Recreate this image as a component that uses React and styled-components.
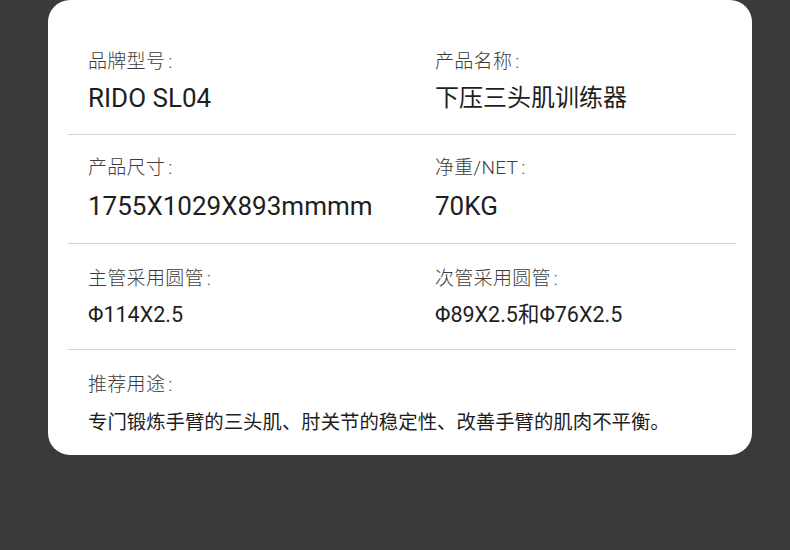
import styled, { createGlobalStyle } from 'styled-components';

const GlobalStyle = createGlobalStyle`
    html, body {
        margin: 0;
        padding: 0;
        background: #3a3a3a;
    }
    body {
        font-family: Roboto, 'Noto Sans CJK SC', sans-serif;
    }
`;

const specs = [
    {
        pad: '50px 0 21px',
        gap: '9px',
        cells: [
            { label: '品牌型号', value: 'RIDO SL04', size: 26 },
            { label: '产品名称', value: '下压三头肌训练器', size: 24 },
        ],
    },
    {
        pad: '21px 0 22px',
        gap: '11px',
        cells: [
            { label: '产品尺寸', value: '1755X1029X893mmmm', size: 26 },
            { label: '净重/NET', value: '70KG', size: 26 },
        ],
    },
    {
        pad: '23px 0 19px',
        gap: '9px',
        cells: [
            { label: '主管采用圆管', value: 'Φ114X2.5', size: 21.5 },
            { label: '次管采用圆管', value: 'Φ89X2.5和Φ76X2.5', size: 21.5 },
        ],
    },
];

function App() {
    return (
        <>
            <GlobalStyle />
            <Page>
                <Card>
                    {specs.map((row, i) => (
                        <Row key={i} $pad={row.pad}>
                            {row.cells.map((cell) => (
                                <Cell key={cell.label}>
                                    <Label>{cell.label}</Label>
                                    <Value $size={cell.size} $gap={row.gap}>
                                        {cell.value}
                                    </Value>
                                </Cell>
                            ))}
                        </Row>
                    ))}
                    <Usage>
                        <Label>推荐用途</Label>
                        <UsageText>
                            专门锻炼手臂的三头肌、肘关节的稳定性、改善手臂的肌肉不平衡。
                        </UsageText>
                    </Usage>
                </Card>
            </Page>
        </>
    );
}

const Page = styled.div`
    width: 790px;
    height: 550px;
    background: #3a3a3a;
    padding: 0 38px 0 48px;
    box-sizing: border-box;
`;

const Card = styled.section`
    width: 704px;
    height: 455px;
    box-sizing: border-box;
    background: #ffffff;
    border-radius: 22px;
    padding: 0 16px 0 20px;
    display: flex;
    flex-direction: column;
`;

const Row = styled.div`
    display: grid;
    grid-template-columns: 347px 1fr;
    padding: ${(p) => p.$pad};
    border-bottom: 1px solid #d4d4d4;
`;

const Cell = styled.div`
    padding-left: 20px;
    display: flex;
    flex-direction: column;
`;

const Label = styled.div`
    font-size: 19px;
    line-height: 24px;
    letter-spacing: 0.3px;
    color: #3c3c3c;
    font-weight: 300;

    &::after {
        content: ':';
        margin-left: 3px;
    }
`;

const Value = styled.div`
    margin-top: ${(p) => p.$gap};
    font-size: ${(p) => p.$size}px;
    line-height: 30px;
    color: #1e1e1e;
    white-space: nowrap;
`;

const Usage = styled.div`
    padding: 23px 0 0 20px;
    display: flex;
    flex-direction: column;
`;

const UsageText = styled.div`
    margin-top: 13px;
    font-size: 19.4px;
    line-height: 26px;
    color: #1e1e1e;
    white-space: nowrap;
`;

export default App;
